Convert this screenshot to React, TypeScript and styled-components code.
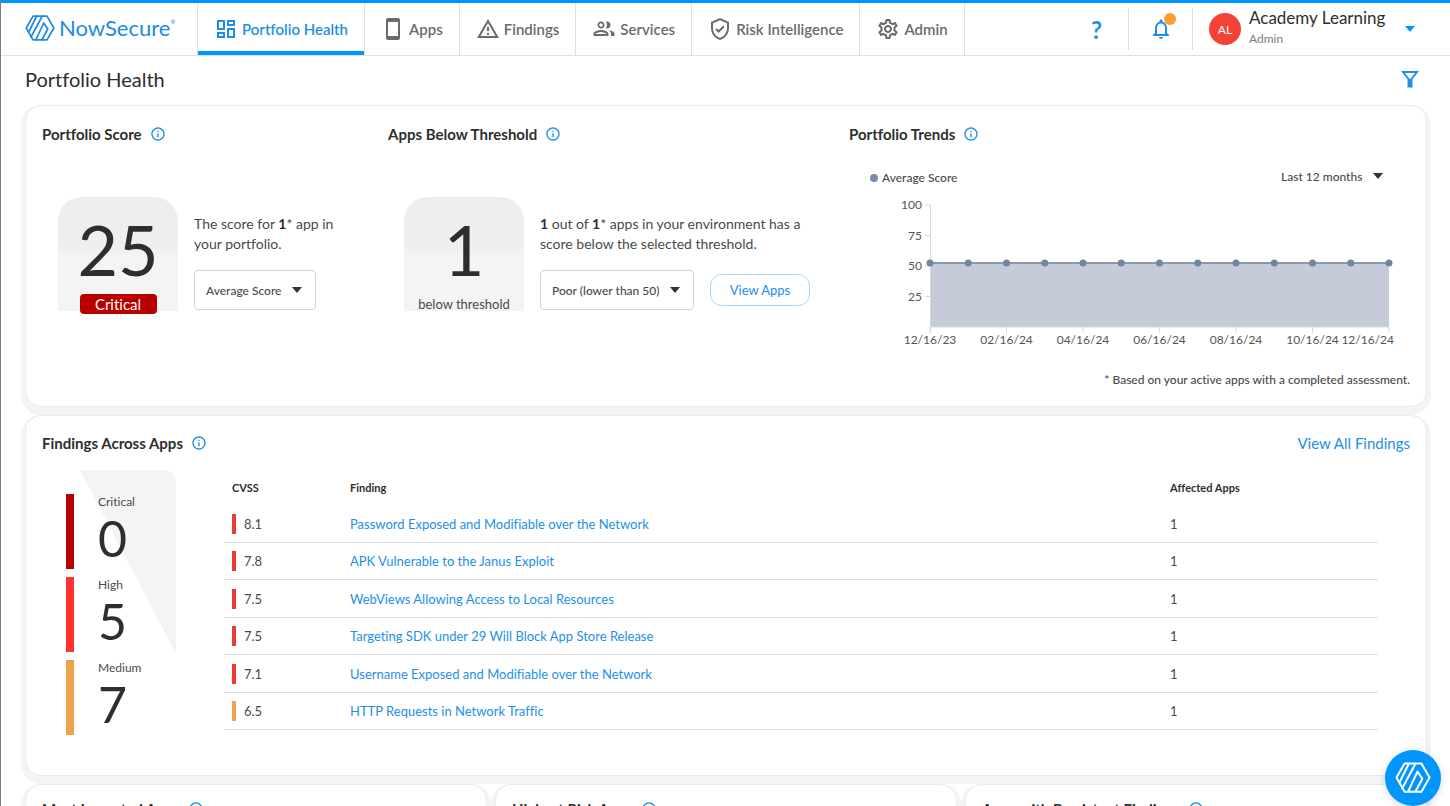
import React from "react";
import styled, { createGlobalStyle, css } from "styled-components";

const SANS = 'Lato, "Open Sans", sans-serif';
const INK = "#2e2e2e";
const TEXT = "#4a4a4a";
const BLUE = "#0096ff";
const LINK = "#1e8fe8";
const LINE = "#e0e0e0";
const SHADE = "#f4f4f4";

const Global = createGlobalStyle`
  *, *::before, *::after { box-sizing: border-box; }
  html { scrollbar-width: none; }
  body { margin: 0; background: #fff; color: ${TEXT}; font-family: ${SANS}; font-size: 14px; line-height: 20px; font-variant-ligatures: none; }
  button, select { font-family: inherit; color: inherit; }
  h1, h2, p, ul, dl, dd { margin: 0; padding: 0; }
  a { color: ${LINK}; text-decoration: none; }
`;

const Shell = styled.div`
  min-height: 100vh;
  border-left: 1px solid #7a7a7a;
`;

const Header = styled.header`
  display: flex;
  height: 56px;
  border-top: 3px solid ${BLUE};
  border-bottom: 1px solid ${LINE};
`;

const Brand = styled.a`
  display: flex;
  align-items: center;
  gap: 4px;
  width: 197px;
  padding: 0 0 2px 24px;
  color: #1c8ae6;
  font-size: 22px;
  line-height: 28px;
  border-right: 1px solid ${LINE};
  sup { font-size: 6px; line-height: 6px; vertical-align: 12px; }
`;

const Nav = styled.nav`
  display: flex;
`;

const NavLink = styled.a<{ $active?: boolean }>`
  display: flex;
  align-items: center;
  gap: 4px;
  padding: 0 16px;
  font-size: 15px;
  font-weight: 600;
  white-space: nowrap;
  color: ${(p) => (p.$active ? LINK : "#6b6b6b")};
  border-right: 1px solid ${LINE};
  box-shadow: ${(p) => (p.$active ? `inset 0 -4px 0 ${BLUE}` : "none")};
  svg { width: 24px; height: 24px; flex: none; }
`;

const HeaderTools = styled.div`
  display: flex;
  align-items: center;
  margin-left: auto;
`;

const ToolButton = styled.button`
  display: flex;
  align-items: center;
  justify-content: center;
  position: relative;
  width: 64px;
  height: 42px;
  padding: 0;
  border: 0;
  border-right: 1px solid ${LINE};
  background: none;
  color: ${LINK};
  font-size: 24px;
  font-weight: 700;
`;

const Dot = styled.span`
  position: absolute;
  top: 5px;
  right: 16px;
  width: 12px;
  height: 12px;
  border-radius: 50%;
  background: #fd9e2f;
`;

const Account = styled.button`
  display: flex;
  align-items: center;
  gap: 8px;
  width: 257px;
  padding: 0 35px 0 16px;
  border: 0;
  background: none;
  text-align: left;
`;

const Avatar = styled.span`
  display: flex;
  align-items: center;
  justify-content: center;
  width: 32px;
  height: 32px;
  border-radius: 50%;
  background: #f44336;
  color: #fff;
  font-size: 12px;
`;

const AccountName = styled.span`
  display: flex;
  flex-direction: column;
  flex: 1;
  color: ${INK};
  font-size: 17px;
  line-height: 20px;
  white-space: nowrap;
  small { font-size: 12px; line-height: 22px; color: #7d7d7d; }
`;

const Main = styled.main`
  padding: 0 23px 24px 24px;
`;

const TitleBar = styled.div`
  display: flex;
  align-items: center;
  justify-content: space-between;
  height: 49px;
  padding: 0 8px 3px 0;
  h1 { font-size: 20px; line-height: 28px; font-weight: 400; color: ${INK}; }
`;

const IconButton = styled.button`
  display: flex;
  padding: 0;
  border: 0;
  background: none;
  color: ${LINK};
`;

const Stack = styled.div`
  display: flex;
  flex-direction: column;
  gap: 8px;
`;

const Card = styled.section`
  padding: 16px;
  background: #fff;
  border: 1px solid #ebebeb;
  border-radius: 16px;
  box-shadow: 0 4px 0 4px ${SHADE};
`;

const Overview = styled(Card)`
  display: grid;
  grid-template-columns: 346px 461px minmax(0, 1fr);
  min-height: 302px;
`;

const FindingsCard = styled(Card)`
  min-height: 361px;
  padding-top: 15px;
`;

const CardRow = styled.div`
  display: grid;
  grid-template-columns: repeat(3, minmax(0, 1fr));
  gap: 8px;
`;

const SmallCard = styled(Card)`
  min-height: 320px;
  padding-top: 12px;
`;

const Heading = styled.h2`
  display: flex;
  align-items: center;
  gap: 8px;
  height: 24px;
  font-size: 15px;
  line-height: 24px;
  font-weight: 700;
  color: ${INK};
`;

const SplitHeading = styled.div`
  display: flex;
  justify-content: space-between;
  a { font-size: 15px; line-height: 24px; }
`;

const Metric = styled.div`
  display: flex;
  gap: 16px;
  padding: 51px 0 0 16px;
`;

const Tile = styled.div`
  display: flex;
  flex-direction: column;
  align-items: center;
  width: 120px;
  height: 114px;
  padding-top: 8px;
  border-radius: 24px 24px 0 0;
  background: linear-gradient(#ededed, #efefef 45%, ${SHADE} 52%);
  font-size: 13px;
  line-height: 20px;
  strong { font-weight: 400; font-size: 70px; line-height: 89px; color: ${INK}; }
`;

const Severity = styled.span`
  width: 77px;
  border-radius: 4px;
  background: #b80000;
  color: #fff;
  font-size: 15px;
  text-align: center;
`;

const MetricBody = styled.div`
  padding-top: 17px;
  font-size: 14px;
  b { color: ${INK}; }
  p { white-space: pre-line; }
`;

const Controls = styled.div`
  display: flex;
  align-items: center;
  gap: 16px;
  margin-top: 16px;
`;

const SelectBox = styled.label<{ $bare?: boolean }>`
  display: inline-flex;
  align-items: center;
  position: relative;
  height: 40px;
  border-radius: 4px;
  ${(p) => !p.$bare && css`border: 1px solid #d2d2d2;`}
  select {
    appearance: none;
    height: 100%;
    padding: 0 33px 0 11px;
    border: 0;
    background: none;
    font-size: 12px;
    font-weight: 500;
  }
  svg { position: absolute; right: 13px; pointer-events: none; }
`;

const PillButton = styled.button`
  width: 100px;
  height: 32px;
  border: 1px solid #a9d3f7;
  border-radius: 12px;
  background: #fff;
  color: ${LINK};
  font-size: 13px;
`;

const TrendHead = styled.div`
  display: flex;
  align-items: center;
  justify-content: space-between;
  height: 40px;
  margin-top: 10px;
  padding: 0 14px 0 21px;
  font-size: 12px;
  font-weight: 500;
`;

const Legend = styled.span`
  display: flex;
  align-items: center;
  gap: 4px;
  padding-top: 4px;
  &::before { content: ""; width: 8px; height: 8px; border-radius: 50%; background: #7a8ca5; }
`;

const Chart = styled.svg`
  display: block;
  width: 100%;
  font-family: ${SANS};
  font-size: 12px;
  fill: #555;
`;

const Footnote = styled.p`
  margin-top: 20px;
  font-size: 12px;
  font-weight: 500;
  text-align: right;
`;

const FindingsBody = styled.div`
  display: flex;
  align-items: flex-start;
  gap: 48px;
  padding: 15px 32px 0 24px;
`;

const Totals = styled.dl`
  display: flex;
  flex-direction: column;
  gap: 8px;
  width: 110px;
  padding-top: 24px;
  border-radius: 0 12px 0 0;
  background: linear-gradient(to top right, transparent 50%, ${SHADE} 50%) no-repeat right top / 96px 184px;
`;

const Total = styled.div<{ $tone: string }>`
  height: 75px;
  padding-left: 24px;
  border-left: 8px solid ${(p) => p.$tone};
  dt { font-size: 12px; line-height: 15px; }
  dd { font-size: 50px; line-height: 58px; color: ${INK}; }
`;

const Table = styled.table`
  flex: 1;
  border-collapse: separate;
  border-spacing: 0;
  table-layout: fixed;
  font-size: 13px;
  th { height: 35px; padding: 0 8px; font-size: 11px; font-weight: 700; text-align: left; color: ${INK}; }
  td { height: 37px; padding: 0 8px; border-bottom: 1px solid ${LINE}; }
  tr:nth-child(odd) td { height: 38px; }
  th:nth-child(1) { width: 118px; }
  th:nth-child(3) { width: 216px; }
`;

const Score = styled.span<{ $tone: string }>`
  display: block;
  padding-left: 8px;
  border-left: 4px solid ${(p) => p.$tone};
`;

const ChatButton = styled.button`
  display: flex;
  align-items: center;
  justify-content: center;
  position: fixed;
  right: 9px;
  bottom: 0;
  width: 56px;
  height: 56px;
  padding: 0;
  border: 0;
  border-radius: 50%;
  background: ${BLUE};
  color: #fff;
  box-shadow: 0 2px 8px rgba(0, 0, 0, 0.15);
`;

const Mark = ({ width }: { width: number }) => (
  <svg width={width} height={(width * 26) / 30} viewBox="0 0 30 26" fill="none" stroke="currentColor" strokeWidth="1.7" strokeLinejoin="round" strokeLinecap="round" aria-hidden="true">
    <path d="M8 1.200h14L28.800 13 22 24.800H8L1.200 13z" />
    <path d="M11.500 1.500 4 16.500M17 1.500 6 22M11 24.500 18.700 8 22.800 14 17 24.500" />
  </svg>
);

const Caret = ({ color = "#333" }: { color?: string }) => (
  <svg width="10" height="6" viewBox="0 0 10 6" aria-hidden="true">
    <path d="M0 0h10L5 6z" fill={color} />
  </svg>
);

const InfoIcon = () => (
  <svg width="16" height="16" viewBox="0 0 24 24" fill={LINK} aria-hidden="true">
    <path d="M11 7h2v2h-2zm0 4h2v6h-2zm1-9C6.480 2 2 6.480 2 12s4.480 10 10 10 10-4.480 10-10S17.520 2 12 2zm0 18c-4.410 0-8-3.590-8-8s3.590-8 8-8 8 3.590 8 8-3.590 8-8 8z" />
  </svg>
);

const icon = (d: string) => (
  <svg viewBox="0 0 24 24" fill="currentColor" aria-hidden="true">
    <path d={d} />
  </svg>
);

const NAV = [
  { label: "Portfolio Health", active: true, d: "M19 5v2h-4V5h4M9 5v6H5V5h4m10 8v6h-4v-6h4M9 17v2H5v-2h4M21 3h-8v6h8V3zM11 3H3v10h8V3zm10 8h-8v10h8V11zm-10 4H3v6h8v-6z" },
  { label: "Apps", d: "M17 1.010 7 1c-1.100 0-2 .9-2 2v18c0 1.100.9 2 2 2h10c1.100 0 2-.9 2-2V3c0-1.100-.9-1.990-2-1.990zM17 19H7V5h10v14z" },
  { label: "Findings", d: "M12 5.990 19.530 19H4.470L12 5.990M12 2 1 21h22L12 2zm1 14h-2v2h2v-2zm0-6h-2v4h2v-4z" },
  { label: "Services", d: "M16.500 13.200C18.200 14.200 19 15.400 19 17v2h3.500v-2.300c0-2-3.100-3.200-6-3.500zM15 11.500c2 0 3.500-1.600 3.500-3.500S17 4.500 15 4.500c-.4 0-.8.1-1.100.2.7.9 1.100 2.100 1.100 3.300s-.4 2.400-1.100 3.300c.3.100.7.2 1.100.2zM9 11.500c1.900 0 3.500-1.600 3.500-3.500S10.900 4.500 9 4.500 5.500 6.100 5.500 8 7.100 11.500 9 11.500zm0-5.200c.9 0 1.700.8 1.700 1.700S9.900 9.700 9 9.700 7.300 8.900 7.300 8 8.100 6.300 9 6.300zm0 6.700c-2.600 0-7.500 1.300-7.500 3.800V19h15v-2.200C16.500 14.300 11.600 13 9 13zm5.500 4h-11c.4-.8 3-2 5.500-2s5.100 1.200 5.500 2z" },
  { label: "Risk Intelligence", d: "M12 1 3 5v6c0 5.550 3.840 10.740 9 12 5.160-1.260 9-6.450 9-12V5l-9-4zm7 10c0 4.520-2.980 8.690-7 9.930-4.020-1.240-7-5.410-7-9.930V6.300l7-3.110 7 3.110V11zM8.800 11.300 7.400 12.700l3.200 3.200 6-6-1.400-1.400-4.600 4.600z" },
  { label: "Admin", d: "M19.430 12.980c.04-.32.07-.64.07-.98 0-.34-.03-.66-.07-.98l2.110-1.650c.19-.15.24-.42.12-.64l-2-3.460c-.09-.16-.26-.25-.44-.25-.06 0-.12.01-.17.03l-2.490 1c-.52-.4-1.080-.73-1.690-.98l-.38-2.650C14.460 2.180 14.250 2 14 2h-4c-.25 0-.46.18-.49.42l-.38 2.650c-.61.25-1.170.59-1.690.98l-2.490-1c-.06-.02-.12-.03-.18-.03-.17 0-.34.09-.43.25l-2 3.460c-.13.22-.07.49.12.64l2.110 1.650c-.04.32-.07.65-.07.98 0 .33.03.66.07.98l-2.110 1.650c-.19.15-.24.42-.12.64l2 3.460c.09.16.26.25.44.25.06 0 .12-.01.17-.03l2.490-1c.52.4 1.080.73 1.690.98l.38 2.650c.03.24.24.42.49.42h4c.25 0 .46-.18.49-.42l.38-2.650c.61-.25 1.170-.59 1.690-.98l2.490 1c.06.02.12.03.18.03.17 0 .34-.09.43-.25l2-3.460c.12-.22.07-.49-.12-.64l-2.110-1.650zm-1.980-1.710c.04.31.05.52.05.73 0 .21-.02.43-.05.73l-.14 1.130.89.7 1.080.84-.7 1.210-1.270-.51-1.040-.42-.9.68c-.43.32-.84.56-1.250.73l-1.060.43-.16 1.130-.2 1.350h-1.400l-.19-1.350-.16-1.130-1.060-.43c-.43-.18-.83-.41-1.230-.71l-.91-.7-1.060.43-1.270.51-.7-1.210 1.080-.84.89-.7-.14-1.130c-.03-.31-.05-.54-.05-.74s.02-.43.05-.73l.14-1.130-.89-.7-1.080-.84.7-1.210 1.270.51 1.040.42.9-.68c.43-.32.84-.56 1.250-.73l1.060-.43.16-1.130.2-1.350h1.390l.19 1.350.16 1.130 1.060.43c.43.18.83.41 1.230.71l.91.7 1.060-.43 1.270-.51.7 1.210-1.070.85-.89.7.14 1.130zM12 8c-2.210 0-4 1.790-4 4s1.790 4 4 4 4-1.790 4-4-1.790-4-4-4zm0 6c-1.100 0-2-.9-2-2s.9-2 2-2 2 .9 2 2-.9 2-2 2z" },
];

const RED = "#ea3b35";
const ORANGE = "#f0a14b";

const FINDINGS = [
  { score: "8.1", title: "Password Exposed and Modifiable over the Network", tone: RED },
  { score: "7.8", title: "APK Vulnerable to the Janus Exploit", tone: RED },
  { score: "7.5", title: "WebViews Allowing Access to Local Resources", tone: RED },
  { score: "7.5", title: "Targeting SDK under 29 Will Block App Store Release", tone: RED },
  { score: "7.1", title: "Username Exposed and Modifiable over the Network", tone: RED },
  { score: "6.5", title: "HTTP Requests in Network Traffic", tone: ORANGE },
];

const TOTALS = [
  { label: "Critical", value: 0, tone: "#b80000" },
  { label: "High", value: 5, tone: "#ff322d" },
  { label: "Medium", value: 7, tone: ORANGE },
];

const MONTHS = ["12/16/23", "02/16/24", "04/16/24", "06/16/24", "08/16/24", "10/16/24"];

const TrendChart = () => {
  const left = 81;
  const right = 540;
  const base = 131;
  const y = (v: number) => base - (v * 122) / 100;
  const x = (i: number) => left + ((right - left) * i) / 12;
  return (
    <Chart viewBox="0 0 561 154" role="img" aria-label="Average score over the last 12 months">
      <path d={`M${left} ${y(52.5)}H${right}V${base}H${left}z`} fill="#c5cbd8" />
      <path d={`M${left}.5 ${y(100)}V${base + 6}M${left} ${base}H${right}`} stroke="#d9d9d9" fill="none" />
      {[100, 75, 50, 25].map((v) => (
        <g key={v}>
          <path d={`M${left - 5} ${y(v)}H${left}`} stroke="#d9d9d9" />
          <text x={left - 8} y={y(v) + 4} textAnchor="end">{v}</text>
        </g>
      ))}
      {MONTHS.map((m, i) => (
        <g key={m}>
          <path d={`M${x(i * 2)} ${base}v6`} stroke="#d9d9d9" />
          <text x={x(i * 2)} y={base + 17} textAnchor="middle">{m}</text>
        </g>
      ))}
      <path d={`M${right} ${base}v6`} stroke="#d9d9d9" />
      <text x={right + 5} y={base + 17} textAnchor="end">12/16/24</text>
      <path d={`M${left} ${y(52.5)}H${right}`} stroke="#8c98a8" strokeWidth="2" />
      {Array.from({ length: 13 }, (_, i) => (
        <circle key={i} cx={x(i)} cy={y(52.5)} r="3.5" fill="#72869f" />
      ))}
    </Chart>
  );
};

const Title = ({ children }: { children: string }) => (
  <Heading>
    {children}
    <InfoIcon />
  </Heading>
);

export default function App() {
  return (
    <Shell>
      <Global />
      <Header>
        <Brand href="#">
          <Mark width={30} />
          <span>NowSecure<sup>®</sup></span>
        </Brand>
        <Nav>
          {NAV.map((n) => (
            <NavLink key={n.label} href="#" $active={n.active}>
              {icon(n.d)}
              {n.label}
            </NavLink>
          ))}
        </Nav>
        <HeaderTools>
          <ToolButton aria-label="Help">?</ToolButton>
          <ToolButton aria-label="Notifications">
            <svg width="24" height="24" viewBox="0 0 24 24" fill="currentColor" aria-hidden="true">
              <path d="M12 22c1.100 0 2-.9 2-2h-4c0 1.100.9 2 2 2zm6-6v-5c0-3.070-1.630-5.640-4.500-6.320V4c0-.83-.67-1.500-1.500-1.500s-1.500.67-1.500 1.500v.68C7.640 5.360 6 7.920 6 11v5l-2 2v1h16v-1l-2-2zm-2 1H8v-6c0-2.480 1.510-4.500 4-4.500s4 2.020 4 4.500v6z" />
            </svg>
            <Dot />
          </ToolButton>
          <Account>
            <Avatar>AL</Avatar>
            <AccountName>
              Academy Learning
              <small>Admin</small>
            </AccountName>
            <Caret color={BLUE} />
          </Account>
        </HeaderTools>
      </Header>
      <Main>
        <TitleBar>
          <h1>Portfolio Health</h1>
          <IconButton aria-label="Filter">
            <svg width="18" height="18" viewBox="0 0 18 18" fill="none" stroke="currentColor" strokeWidth="2" aria-hidden="true">
              <path d="M2 2h14l-5.500 7v7.500h-3V9z" />
              <path d="M9 9v7" />
            </svg>
          </IconButton>
        </TitleBar>
        <Stack>
          <Overview>
            <div>
              <Title>Portfolio Score</Title>
              <Metric>
                <Tile>
                  <strong>25</strong>
                  <Severity>Critical</Severity>
                </Tile>
                <MetricBody>
                  <p>The score for <b>1</b>* app in{"\n"}your portfolio.</p>
                  <Controls>
                    <SelectBox>
                      <select aria-label="Score type"><option>Average Score</option></select>
                      <Caret />
                    </SelectBox>
                  </Controls>
                </MetricBody>
              </Metric>
            </div>
            <div>
              <Title>Apps Below Threshold</Title>
              <Metric>
                <Tile>
                  <strong>1</strong>
                  below threshold
                </Tile>
                <MetricBody>
                  <p><b>1</b> out of <b>1</b>* apps in your environment has a{"\n"}score below the selected threshold.</p>
                  <Controls>
                    <SelectBox>
                      <select aria-label="Threshold"><option>Poor (lower than 50)</option></select>
                      <Caret />
                    </SelectBox>
                    <PillButton>View Apps</PillButton>
                  </Controls>
                </MetricBody>
              </Metric>
            </div>
            <div>
              <Title>Portfolio Trends</Title>
              <TrendHead>
                <Legend>Average Score</Legend>
                <SelectBox $bare>
                  <select aria-label="Period"><option>Last 12 months</option></select>
                  <Caret />
                </SelectBox>
              </TrendHead>
              <TrendChart />
              <Footnote>* Based on your active apps with a completed assessment.</Footnote>
            </div>
          </Overview>
          <FindingsCard>
            <SplitHeading>
              <Title>Findings Across Apps</Title>
              <a href="#">View All Findings</a>
            </SplitHeading>
            <FindingsBody>
              <Totals>
                {TOTALS.map((t) => (
                  <Total key={t.label} $tone={t.tone}>
                    <dt>{t.label}</dt>
                    <dd>{t.value}</dd>
                  </Total>
                ))}
              </Totals>
              <Table>
                <thead>
                  <tr><th>CVSS</th><th>Finding</th><th>Affected Apps</th></tr>
                </thead>
                <tbody>
                  {FINDINGS.map((f) => (
                    <tr key={f.title}>
                      <td><Score $tone={f.tone}>{f.score}</Score></td>
                      <td><a href="#">{f.title}</a></td>
                      <td>1</td>
                    </tr>
                  ))}
                </tbody>
              </Table>
            </FindingsBody>
          </FindingsCard>
          <CardRow>
            <SmallCard><Title>Most Impacted Apps</Title></SmallCard>
            <SmallCard><Title>Highest Risk Apps</Title></SmallCard>
            <SmallCard><Title>Apps with Persistent Findings</Title></SmallCard>
          </CardRow>
        </Stack>
      </Main>
      <ChatButton aria-label="Open help">
        <Mark width={36} />
      </ChatButton>
    </Shell>
  );
}
